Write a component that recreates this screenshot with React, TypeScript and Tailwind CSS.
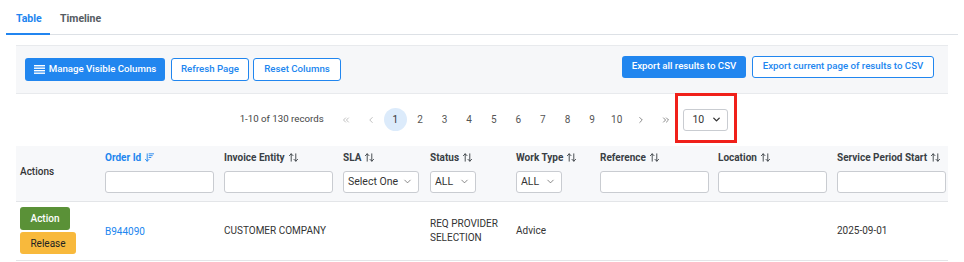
import { ArrowDownWideNarrow, ArrowUpDown, ChevronDown, ChevronLeft, ChevronRight, ChevronsLeft, ChevronsRight } from "lucide-react";

const columns = [
  { key: "order", label: "Order Id", width: "w-[119px]", filter: "input", active: true },
  { key: "invoice", label: "Invoice Entity", width: "w-[119px]", filter: "input" },
  { key: "sla", label: "SLA", width: "w-[87px]", filter: "Select One", selectW: "w-[76px]" },
  { key: "status", label: "Status", width: "w-[86px]", filter: "ALL", selectW: "w-[46px]" },
  { key: "work", label: "Work Type", width: "w-[84px]", filter: "ALL", selectW: "w-[46px]" },
  { key: "ref", label: "Reference", width: "w-[118px]", filter: "input" },
  { key: "loc", label: "Location", width: "w-[119px]", filter: "input" },
  { key: "svc", label: "Service Period Start", width: "w-[115px]", filter: "input" },
];

function ListIcon() {
  return (
    <svg width="11" height="9" viewBox="0 0 11 9" className="mr-[4px]">
      <rect x="0" y="0" width="11" height="1.4" fill="white" />
      <rect x="0" y="2.5" width="11" height="1.4" fill="white" />
      <rect x="0" y="5" width="11" height="1.4" fill="white" />
      <rect x="0" y="7.5" width="11" height="1.4" fill="white" />
    </svg>
  );
}

function FilterSelect({ text, w }: { text: string; w: string }) {
  return (
    <div className={`${w} h-[22px] flex items-center justify-between rounded-[3px] border border-[#c9ccd1] bg-white pl-[4px] pr-[5px] text-[10.5px] text-[#333]`}>
      <span>{text}</span>
      <ChevronDown size={11} strokeWidth={1.5} className="text-[#555]" />
    </div>
  );
}

export default function App() {
  const pages = ["1", "2", "3", "4", "5", "6", "7", "8", "9", "10"];
  return (
    <div className="w-[964px] h-[262px] bg-white font-['Roboto',sans-serif] overflow-hidden">
      {/* tabs */}
      <div className="mx-[6px] flex border-b border-[#dde1e6] pt-[11px] text-[10.5px] font-bold">
        <div className="w-[44px] border-b-2 border-[#2185f0] pb-[6px] pl-[10px] -mb-px text-[#2185f0]">Table</div>
        <div className="pl-[10px] pb-[6px] text-[#555b62]">Timeline</div>
      </div>

      <div className="mx-[16px] mt-[10px] w-[932px]">
        {/* toolbar */}
        <div className="flex h-[49px] items-start justify-between border-y border-[#e8eaed] bg-[#f6f7f9] px-[9px]">
          <div className="mt-[12px] flex text-[9.7px] font-medium">
            <button className="flex h-[23px] w-[140px] items-center justify-center rounded-[3px] bg-[#2186ef] text-white">
              <ListIcon />
              Manage Visible Columns
            </button>
            <button className="ml-[6px] h-[23px] w-[78px] rounded-[3px] border border-[#2186ef] bg-white text-[#2186ef]">Refresh Page</button>
            <button className="ml-[4px] h-[23px] w-[88px] rounded-[3px] border border-[#2186ef] bg-white text-[#2186ef]">Reset Columns</button>
          </div>
          <div className="mt-[10px] mr-[5px] flex gap-[6px] text-[9.7px] font-medium">
            <button className="h-[22px] w-[124px] rounded-[3px] bg-[#2186ef] text-white">Export all results to CSV</button>
            <button className="h-[22px] w-[182px] rounded-[3px] border border-[#2186ef] bg-white text-[#2186ef]">Export current page of results to CSV</button>
          </div>
        </div>

        {/* pagination */}
        <div className="flex h-[52px] items-center justify-center text-[10px] text-[#555]">
          <span className="ml-[4px] mr-[11px] text-[9.7px] text-[#444]">1-10 of 130 records</span>
          <div className="flex items-center gap-[1.6px]">
            <span className="flex w-[23px] justify-center text-[#999]"><ChevronsLeft size={10} strokeWidth={1.5} /></span>
            <span className="flex w-[23px] justify-center text-[#999]"><ChevronLeft size={10} strokeWidth={1.5} /></span>
            {pages.map((p) => (
              <span
                key={p}
                className={`flex h-[23px] w-[23px] items-center justify-center rounded-full ${p === "1" ? "bg-[#dcebfb] text-[#333]" : "text-[#555]"}`}
              >
                {p}
              </span>
            ))}
            <span className="flex w-[23px] justify-center text-[#444]"><ChevronRight size={10} strokeWidth={1.5} /></span>
            <span className="flex w-[23px] justify-center text-[#444]"><ChevronsRight size={10} strokeWidth={1.5} /></span>
          </div>
          <div className="relative ml-[6px]">
            <div className="flex h-[22px] w-[45px] items-center justify-between rounded-[3px] border border-[#c9ccd1] pl-[8px] pr-[5px] text-[10.5px] text-[#333]">
              <span>10</span>
              <ChevronDown size={11} strokeWidth={3} className="text-[#333]" />
            </div>
            <div className="absolute -left-[8px] -top-[16px] h-[50px] w-[62px] border-[3px] border-[#f0201a]" />
          </div>
        </div>

        {/* table */}
        <div className="flex h-[55px] bg-[#f7f8fa]">
          <div className="flex w-[85px] items-center pl-[4px] pb-[4px] text-[10px] font-medium text-[#333]">Actions</div>
          {columns.map((c) => (
            <div key={c.key} className={`${c.width} pl-[4px] pt-[5px]`}>
              <div className={`flex h-[13px] items-center gap-[3px] text-[10px] font-bold ${c.active ? "text-[#2186ef]" : "text-[#3a3f45]"}`}>
                {c.label}
                {c.active ? (
                  <ArrowDownWideNarrow size={11} strokeWidth={2} />
                ) : (
                  <ArrowUpDown size={11} strokeWidth={2} />
                )}
              </div>
              <div className="mt-[7px]">
                {c.filter === "input" ? (
                  <div className="h-[22px] w-[109px] rounded-[3px] border border-[#c9ccd1] bg-white" />
                ) : (
                  <FilterSelect text={c.filter} w={c.selectW ?? ""} />
                )}
              </div>
            </div>
          ))}
        </div>

        <div className="flex h-[60px] items-center border-y border-[#e3e5e8] text-[10px] text-[#333]">
          <div className="flex w-[85px] flex-col items-start gap-[2px] pl-[4px]">
            <button className="h-[23px] w-[50px] rounded-[3px] bg-[#5a9137] text-[10px] font-medium text-white">Action</button>
            <button className="h-[22px] w-[56px] rounded-[3px] bg-[#f8b93c] text-[10px] text-[#222]">Release</button>
          </div>
          <div className="w-[119px] pl-[4px] pt-[1px] text-[#2186ef]">B944090</div>
          <div className="w-[119px] pl-[4px]">CUSTOMER COMPANY</div>
          <div className="w-[87px] pl-[4px]"></div>
          <div className="w-[86px] pl-[4px] leading-[14px]">REQ PROVIDER<br />SELECTION</div>
          <div className="w-[84px] pl-[4px]">Advice</div>
          <div className="w-[118px] pl-[4px]"></div>
          <div className="w-[119px] pl-[4px]"></div>
          <div className="w-[115px] pl-[4px]">2025-09-01</div>
        </div>
      </div>
    </div>
  );
}
